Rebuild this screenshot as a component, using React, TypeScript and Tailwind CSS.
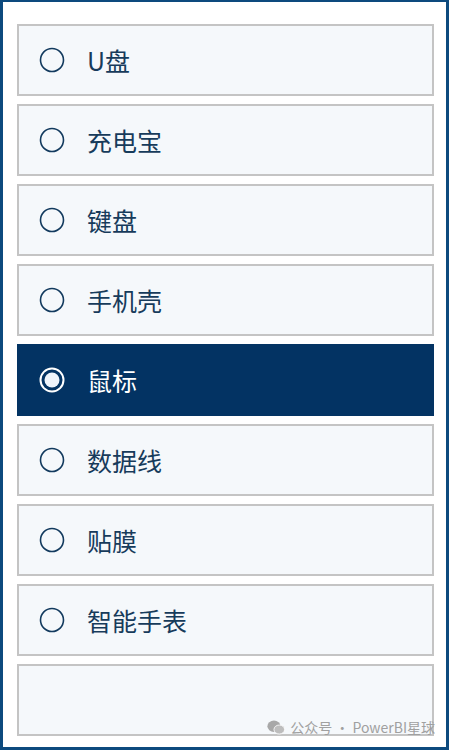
import { useState } from 'react';

const items = ['U盘', '充电宝', '键盘', '手机壳', '鼠标', '数据线', '贴膜', '智能手表'];

function Radio({ on }: { on: boolean }) {
  return (
    <svg width="28" height="28" viewBox="0 0 28 28" className="shrink-0">
      {on ? (
        <>
          <circle cx="14" cy="14" r="11.5" fill="none" stroke="#ffffff" strokeWidth="2" />
          <circle cx="14" cy="14" r="7.5" fill="#eef4fb" />
        </>
      ) : (
        <circle cx="14" cy="14" r="11.5" fill="none" stroke="#123a5e" strokeWidth="1.6" />
      )}
    </svg>
  );
}

function App() {
  const [selected, setSelected] = useState('鼠标');

  return (
    <div className="w-[449px] h-[750px] bg-white border-l-[3px] border-r-[3px] border-t-2 border-b-[3px] border-[#0d4a7e] overflow-hidden relative">
      {/* Slicer tiles */}
      <div className="flex flex-col gap-2 pl-[14px] pr-[12px] pt-[22px]">
        {items.map((name) => {
          const on = name === selected;
          return (
            <button
              key={name}
              onClick={() => setSelected(name)}
              className={
                'h-[72px] flex items-center gap-[21px] pl-[19px] text-left border-2 ' +
                (on ? 'bg-[#033363] border-[#033363] text-white' : 'bg-[#f5f8fb] border-[#c4c4c4] text-[#173b5b]')
              }
            >
              <Radio on={on} />
              <span className="text-[25px] leading-none font-['Noto_Sans_CJK_SC',sans-serif]">{name}</span>
            </button>
          );
        })}
        <div className="h-[72px] border-2 border-[#c4c4c4] bg-[#f5f8fb]" />
      </div>

      {/* Watermark */}
      <div className="absolute right-[11px] bottom-[9px] flex items-center gap-[5px] text-[14px] text-[#a0a0a0] font-['Noto_Sans_CJK_SC',sans-serif]">
        <svg width="18" height="15" viewBox="0 0 22 18">
          <ellipse cx="8.5" cy="7.5" rx="8" ry="7" fill="#a8a8a8" />
          <ellipse cx="15" cy="11.5" rx="6.5" ry="5.5" fill="#bdbdbd" stroke="#fff" strokeWidth="1" />
        </svg>
        <span>公众号 · PowerBI星球</span>
      </div>
    </div>
  );
}

export default App;
